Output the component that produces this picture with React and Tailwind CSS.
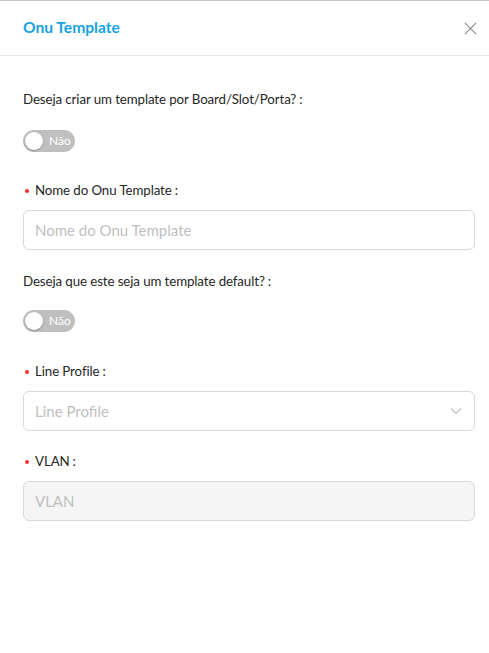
import React from "react";

const Label = ({ required, children, className = "" }) => (
  <div className={`flex h-[22px] items-center text-[13.3px] tracking-[-0.1px] text-[#262626] ${className}`}>
    {required && <span className="ml-[2px] mr-[6px] h-[4px] w-[4px] rounded-full bg-[#ff2d2d]" />}
    <span>{children}</span>
    <span className="ml-[3px]">:</span>
  </div>
);

const Toggle = ({ className = "" }) => (
  <div className={`flex h-[22px] w-[52px] items-center rounded-full bg-[#bfbfbf] pl-[2px] ${className}`}>
    <div className="h-[18px] w-[18px] rounded-full bg-white shadow-[0_1px_2px_rgba(0,0,0,0.25)]" />
    <span className="ml-[6px] text-[12px] text-white">Não</span>
  </div>
);

const App = () => {
  return (
    <div
      className="h-[653px] w-[489px] bg-white border-t border-[#c4c4c4]"
      style={{ fontFamily: "Lato, 'Noto Sans', sans-serif" }}
    >
      {/* Header */}
      <div className="flex h-[55px] items-center justify-between border-b border-[#e8e8e8] pl-[23px] pr-[12px]">
        <h1 className="text-[15.6px] font-bold text-[#16a3e0]">Onu Template</h1>
        <svg className="h-[13px] w-[13px] text-[#8c8c8c]" viewBox="0 0 14 14" fill="none" stroke="currentColor" strokeWidth="1.2">
          <path d="M1 1l12 12M13 1L1 13" />
        </svg>
      </div>

      {/* Form */}
      <div className="pl-[23px] pr-[14px] pt-[33px]">
        <Label>Deseja criar um template por Board/Slot/Porta?</Label>
        <Toggle className="mt-[19px]" />

        <Label required className="mt-[28px]">Nome do Onu Template</Label>
        <div className="mt-[8px] flex h-[40px] items-center rounded-[6px] border border-[#d9d9d9] px-[11px] text-[15px] text-[#bfbfbf]">
          Nome do Onu Template
        </div>

        <Label className="mt-[21px]">Deseja que este seja um template default?</Label>
        <Toggle className="mt-[17px]" />

        <Label required className="mt-[29px]">Line Profile</Label>
        <div className="mt-[8px] flex h-[40px] items-center justify-between rounded-[6px] border border-[#d9d9d9] pl-[11px] pr-[12px] text-[15px] text-[#bfbfbf]">
          <span>Line Profile</span>
          <svg className="h-[8px] w-[12px] text-[#bfbfbf]" viewBox="0 0 12 8" fill="none" stroke="currentColor" strokeWidth="1.1">
            <path d="M1 1.5l5 5 5-5" />
          </svg>
        </div>

        <Label required className="mt-[20px]">VLAN</Label>
        <div className="mt-[8px] flex h-[40px] items-center rounded-[6px] border border-[#d9d9d9] bg-[#f5f5f5] px-[11px] text-[15px] text-[#bfbfbf]">
          VLAN
        </div>
      </div>
    </div>
  );
};

export default App;
